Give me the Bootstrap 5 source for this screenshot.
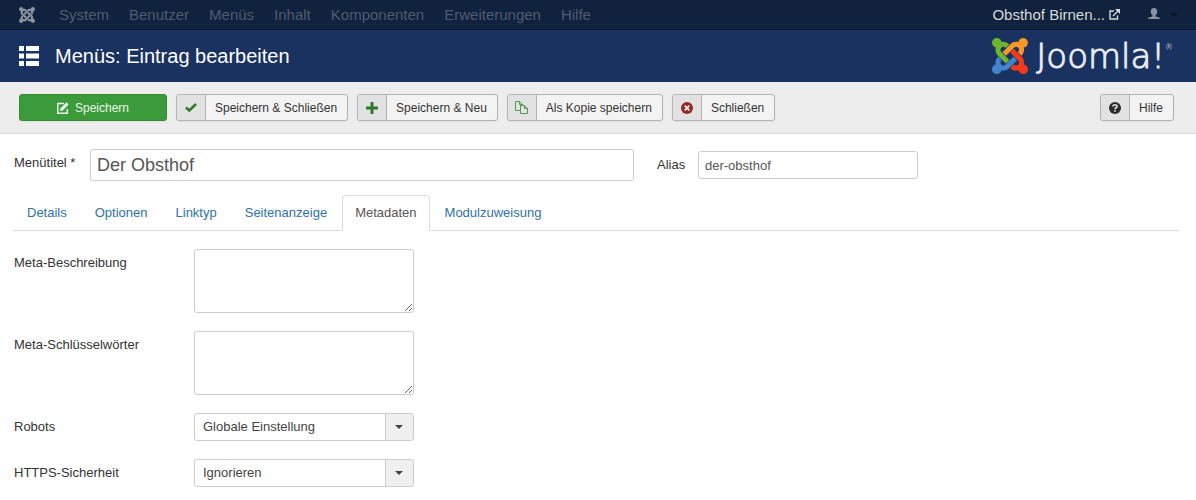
<!DOCTYPE html>
<html lang="de">
<head>
<meta charset="utf-8">
<meta name="viewport" content="width=device-width, initial-scale=1">
<title>Menüs: Eintrag bearbeiten</title>
<link href="https://cdn.jsdelivr.net/npm/bootstrap@5.3.0/dist/css/bootstrap.min.css" rel="stylesheet">
<script src="https://cdn.jsdelivr.net/npm/bootstrap@5.3.0/dist/js/bootstrap.bundle.min.js" defer></script>
<style>
  body { font: 13px/18px "Liberation Sans", Arial, sans-serif; color: #333; background: #fff; }
  svg { display: block; flex: none; }

  .admin-nav { height: 30px; padding: 0 18px 0 19px; background: #10223e; border-bottom: 1px solid #0b1a31; font-size: 15px; line-height: 28px; }
  .admin-nav .nav-link { padding: 0 10px; color: #4f5b70; }
  .admin-nav .brand-mark { color: #8b939f; padding-right: 14px; }
  .admin-nav .site-link { color: #d9d9d9; text-decoration: none; margin-right: 28px; }
  .admin-nav .user-toggle { color: #8b939f; border: 0; background: none; padding: 0; gap: 10px; }

  .page-head { height: 52px; padding: 0 23px 0 19px; background: #1a3260; color: #fff; }
  .page-head h1 { font-size: 20px; line-height: 24px; font-weight: 400; margin: 0; }
  .wordmark { font: 200 34px/34px "DejaVu Sans Light", "DejaVu Sans", sans-serif; color: #e8ecf2; -webkit-text-stroke: 1px #e8ecf2; }
  .wordmark sup { font-size: 8px; line-height: 8px; top: -18px; -webkit-text-stroke: 0; }

  .tool-strip { padding: 12px 22px 12px 19px; gap: 9px; background: #ededed; border-bottom: 1px solid #dcdcdc; }
  .tool-btn { height: 27px; padding: 0; border: 1px solid #b3b3b3; border-radius: 3px; background: #f3f3f3; color: #333; font-size: 12px; line-height: 26px; overflow: hidden; box-shadow: 0 1px 2px rgba(0,0,0,.05); }
  .tool-btn:hover { background: #e6e6e6; border-color: #b3b3b3; }
  .tool-icon { width: 29px; height: 25px; background: #e2e2e2; border-right: 1px solid #b3b3b3; }
  .tool-text { padding: 0 10px 0 9px; }
  .tool-save { width: 148px; gap: 6px; background: #3b9b3b; border-color: #368a36; color: #e9f5e9; }
  .tool-save:hover { background: #318231; border-color: #318231; color: #fff; }

  .work-area { padding: 15px 18px 12px 14px; }
  .title-label { width: 76px; padding-top: 5px; }
  .alias-label { width: 41px; }
  .form-control, .form-select { border: 1px solid #ccc; border-radius: 3px; color: #555; font-size: 13px; line-height: 18px; padding: 4px 6px; box-shadow: none; }
  .title-input { width: 544px; height: 32px; font-size: 18px; line-height: 22px; }
  .field { width: 220px; }
  .alias-group { margin-left: 23px; }
  .alias-input { height: 28px; }

  .nav-tabs { margin: 14px 0 18px; border-color: #ddd; }
  .nav-tabs .nav-link { padding: 8px 12px; margin-right: 2px; color: #3071a9; border-radius: 4px 4px 0 0; }
  .nav-tabs .nav-link.active { color: #555; border-color: #ddd #ddd #fff; }

  .field-rows { display: grid; gap: 18px; }
  .field-label { width: 180px; padding-top: 5px; }
  textarea.form-control { height: 64px; min-height: 64px; }
  .form-select { height: 28px; padding: 4px 36px 4px 8px; color: #444; background: #fff url("data:image/svg+xml,%3Csvg xmlns='http://www.w3.org/2000/svg' width='28' height='26'%3E%3Crect width='28' height='26' fill='%23f0f0f0'/%3E%3Crect width='1' height='26' fill='%23ccc'/%3E%3Cpath d='M10 11h8l-4 4z' fill='%23444'/%3E%3C/svg%3E") no-repeat right center / 28px 26px; }
</style>
</head>
<body>
<nav class="admin-nav d-flex align-items-center">
  <a class="brand-mark" href="#" aria-label="Joomla">
    <svg width="16" height="16" viewBox="0 32 448 448" fill="currentColor"><use href="#j-green"/><use href="#j-orange"/><use href="#j-red"/><use href="#j-blue"/></svg>
  </a>
  <div class="nav flex-nowrap me-auto">
    <a class="nav-link" href="#">System</a>
    <a class="nav-link" href="#">Benutzer</a>
    <a class="nav-link" href="#">Menüs</a>
    <a class="nav-link" href="#">Inhalt</a>
    <a class="nav-link" href="#">Komponenten</a>
    <a class="nav-link" href="#">Erweiterungen</a>
    <a class="nav-link" href="#">Hilfe</a>
  </div>
  <a class="site-link d-flex align-items-center gap-1" href="#">Obsthof Birnen...
    <svg width="11" height="11" viewBox="0 0 11 11" fill="none" stroke="currentColor" stroke-width="1.4"><path d="M5 2H1v8h7.500V6.500M4 7l5-5"/><path d="M6 0h5v5z" fill="currentColor" stroke="none"/></svg>
  </a>
  <button class="user-toggle d-flex align-items-center" type="button" aria-label="Benutzermenü">
    <svg width="12" height="14" viewBox="0 0 12 14" fill="currentColor"><path d="M6 0c2.200 0 3.200 1.500 3.200 3.400 0 1.700-.8 3.100-1.700 3.800v1.300l3.500 1c.7.200 1 .7 1 1.500H0c0-.8.300-1.300 1-1.500l3.500-1V7.200C3.600 6.500 2.800 5.100 2.800 3.400 2.800 1.500 3.800 0 6 0z"/></svg>
    <svg width="8" height="4" viewBox="0 0 8 4"><path d="M0 0h8L4 4z" fill="#0a1528"/></svg>
  </button>
</nav>

<header class="page-head d-flex align-items-center justify-content-between">
  <div class="d-flex align-items-center gap-3">
    <svg width="20" height="20" viewBox="0 0 20 20" fill="#fff"><path d="M0 0h5v5H0zM7 0h13v5H7zM0 7.500h5v5H0zM7 7.500h13v5H7zM0 15h5v5H0zM7 15h13v5H7z"/></svg>
    <h1>Menüs: Eintrag bearbeiten</h1>
  </div>
  <div class="d-flex align-items-center gap-2">
    <svg width="36" height="36" viewBox="0 32 448 448">
      <defs>
        <path id="j-green" d="M.6 92.100C.6 58.800 27.400 32 60.400 32c30 0 54.500 21.900 59.200 50.200 32.600-7.600 67.100.6 96.500 30l-44.300 44.300c-20.500-20.500-42.600-16.300-55.400-3.500-14.300 14.300-14.300 37.900 0 52.200l99.500 99.500-44 44.300c-87.700-87.200-49.700-49.700-99.800-99.700-26.800-26.500-35-64.800-24.800-98.900C20.400 144.600.6 120.700.6 92.100z"/>
        <path id="j-orange" d="M130.100 208.500l44.300 44.300c10-10 89.700-89.700 99.700-99.800 14.300-14.300 37.600-14.300 51.900 0 12.800 12.800 17 35-3.500 55.400l44 44.300c31.200-31.200 38.500-67.600 28.900-101.200 29.200-4.100 51.900-29.200 51.900-59.500 0-33.200-26.800-60.100-59.800-60.100-30.300 0-55.400 22.500-59.500 51.600-33.800-9.900-71.700-1.500-98.300 25.100-18.300 19.100-71.100 71.500-99.600 99.900z"/>
        <path id="j-red" d="M396.400 360.700c8.200-32.700-.9-68.500-26.300-93.900-11.800-12.200 5 4.700-99.500-99.700l-44.300 44.300 99.700 99.700c14.300 14.300 14.300 37.600 0 51.900-12.800 12.800-35 17-55.400-3.500l-44 44.300c27.600 30.200 68 38.800 102.700 28 5.500 27.400 29.700 48.100 58.900 48.100 33 0 59.800-26.800 59.800-60.100 0-30.200-22.500-55-51.600-59.100z"/>
        <path id="j-blue" d="M312.100 307.600l-44-44.300c-87 86.400-50.400 50.400-99.700 99.800-14.300 14.300-37.600 14.300-51.900 0-13.100-13.400-16.900-35.300 3.200-55.400l-44-44.300c-30.200 30.200-38 65.200-29.500 98.300-26.700 6-46.200 29.900-46.200 58.200C0 453.200 26.800 480 59.800 480c28.600 0 52.500-19.800 58.600-46.700 32.700 8.200 68.500-.6 94.200-26 32.100-32 12.200-12.400 99.500-99.700z"/>
      </defs>
      <use href="#j-green" fill="#6cb52d"/><use href="#j-orange" fill="#f8982a"/><use href="#j-red" fill="#f2391b"/><use href="#j-blue" fill="#4183cc"/>
    </svg>
    <span class="wordmark">Joomla!<sup>®</sup></span>
  </div>
</header>

<div class="tool-strip d-flex flex-wrap">
  <button class="btn tool-btn tool-save d-flex align-items-center justify-content-center" type="button">
    <svg width="12" height="12" viewBox="0 0 12 12" fill="none" stroke="currentColor" stroke-width="1.5"><path d="M7 1.500H.8v9.700h9.500V7"/><path d="M3 9l.6-2.800L9.500.3l2.200 2.200-5.900 5.900z" fill="currentColor" stroke="none"/></svg>
    <span>Speichern</span>
  </button>
  <button class="btn tool-btn d-flex" type="button">
    <span class="tool-icon d-flex align-items-center justify-content-center"><svg width="12" height="10" viewBox="0 0 12 10"><path d="M1 4.500l3.300 3L11 1" fill="none" stroke="#2d7a2d" stroke-width="2.600"/></svg></span>
    <span class="tool-text">Speichern &amp; Schließen</span>
  </button>
  <button class="btn tool-btn d-flex" type="button">
    <span class="tool-icon d-flex align-items-center justify-content-center"><svg width="12" height="12" viewBox="0 0 12 12"><path d="M6 0v12M0 6h12" stroke="#2d7a2d" stroke-width="3"/></svg></span>
    <span class="tool-text">Speichern &amp; Neu</span>
  </button>
  <button class="btn tool-btn d-flex" type="button">
    <span class="tool-icon d-flex align-items-center justify-content-center"><svg width="13" height="13" viewBox="0 0 13 13" fill="none" stroke="#4f9a4f"><path d="M5.500 9.500h-5v-9h4l3 3v1M4.500.5v3h3M5.500 4.500h4l3 3v5h-7zM9.500 4.500v3h3"/></svg></span>
    <span class="tool-text">Als Kopie speichern</span>
  </button>
  <button class="btn tool-btn d-flex" type="button">
    <span class="tool-icon d-flex align-items-center justify-content-center"><svg width="12" height="12" viewBox="0 0 12 12"><circle cx="6" cy="6" r="6" fill="#942a25"/><path d="M3.700 3.700l4.600 4.600M8.300 3.700L3.700 8.300" stroke="#eee" stroke-width="1.800"/></svg></span>
    <span class="tool-text">Schließen</span>
  </button>
  <button class="btn tool-btn d-flex ms-auto" type="button">
    <span class="tool-icon d-flex align-items-center justify-content-center"><svg width="12" height="12" viewBox="0 0 12 12"><circle cx="6" cy="6" r="6" fill="#2b2b2b"/><path d="M4 4.500C4 2.200 8 2.200 8 4.400 8 5.700 6 5.700 6 7.200M6 8.200v1.600" fill="none" stroke="#e2e2e2" stroke-width="1.700"/></svg></span>
    <span class="tool-text">Hilfe</span>
  </button>
</div>

<main class="work-area">
  <div class="d-flex flex-wrap">
    <div class="d-flex">
      <label class="title-label" for="menu-title">Menütitel *</label>
      <input class="form-control title-input" id="menu-title" type="text" value="Der Obsthof">
    </div>
    <div class="alias-group d-flex align-items-center">
      <label class="alias-label" for="alias">Alias</label>
      <input class="form-control field alias-input" id="alias" type="text" value="der-obsthof">
    </div>
  </div>

  <ul class="nav nav-tabs">
    <li class="nav-item"><a class="nav-link" href="#">Details</a></li>
    <li class="nav-item"><a class="nav-link" href="#">Optionen</a></li>
    <li class="nav-item"><a class="nav-link" href="#">Linktyp</a></li>
    <li class="nav-item"><a class="nav-link" href="#">Seitenanzeige</a></li>
    <li class="nav-item"><a class="nav-link active" href="#" aria-current="page">Metadaten</a></li>
    <li class="nav-item"><a class="nav-link" href="#">Modulzuweisung</a></li>
  </ul>

  <form class="field-rows">
    <div class="d-flex">
      <label class="field-label" for="meta-desc">Meta-Beschreibung</label>
      <textarea class="form-control field" id="meta-desc"></textarea>
    </div>
    <div class="d-flex">
      <label class="field-label" for="meta-keys">Meta-Schlüsselwörter</label>
      <textarea class="form-control field" id="meta-keys"></textarea>
    </div>
    <div class="d-flex">
      <label class="field-label" for="robots">Robots</label>
      <select class="form-select field" id="robots"><option>Globale Einstellung</option></select>
    </div>
    <div class="d-flex">
      <label class="field-label" for="https">HTTPS-Sicherheit</label>
      <select class="form-select field" id="https"><option>Ignorieren</option></select>
    </div>
  </form>
</main>
</body>
</html>
